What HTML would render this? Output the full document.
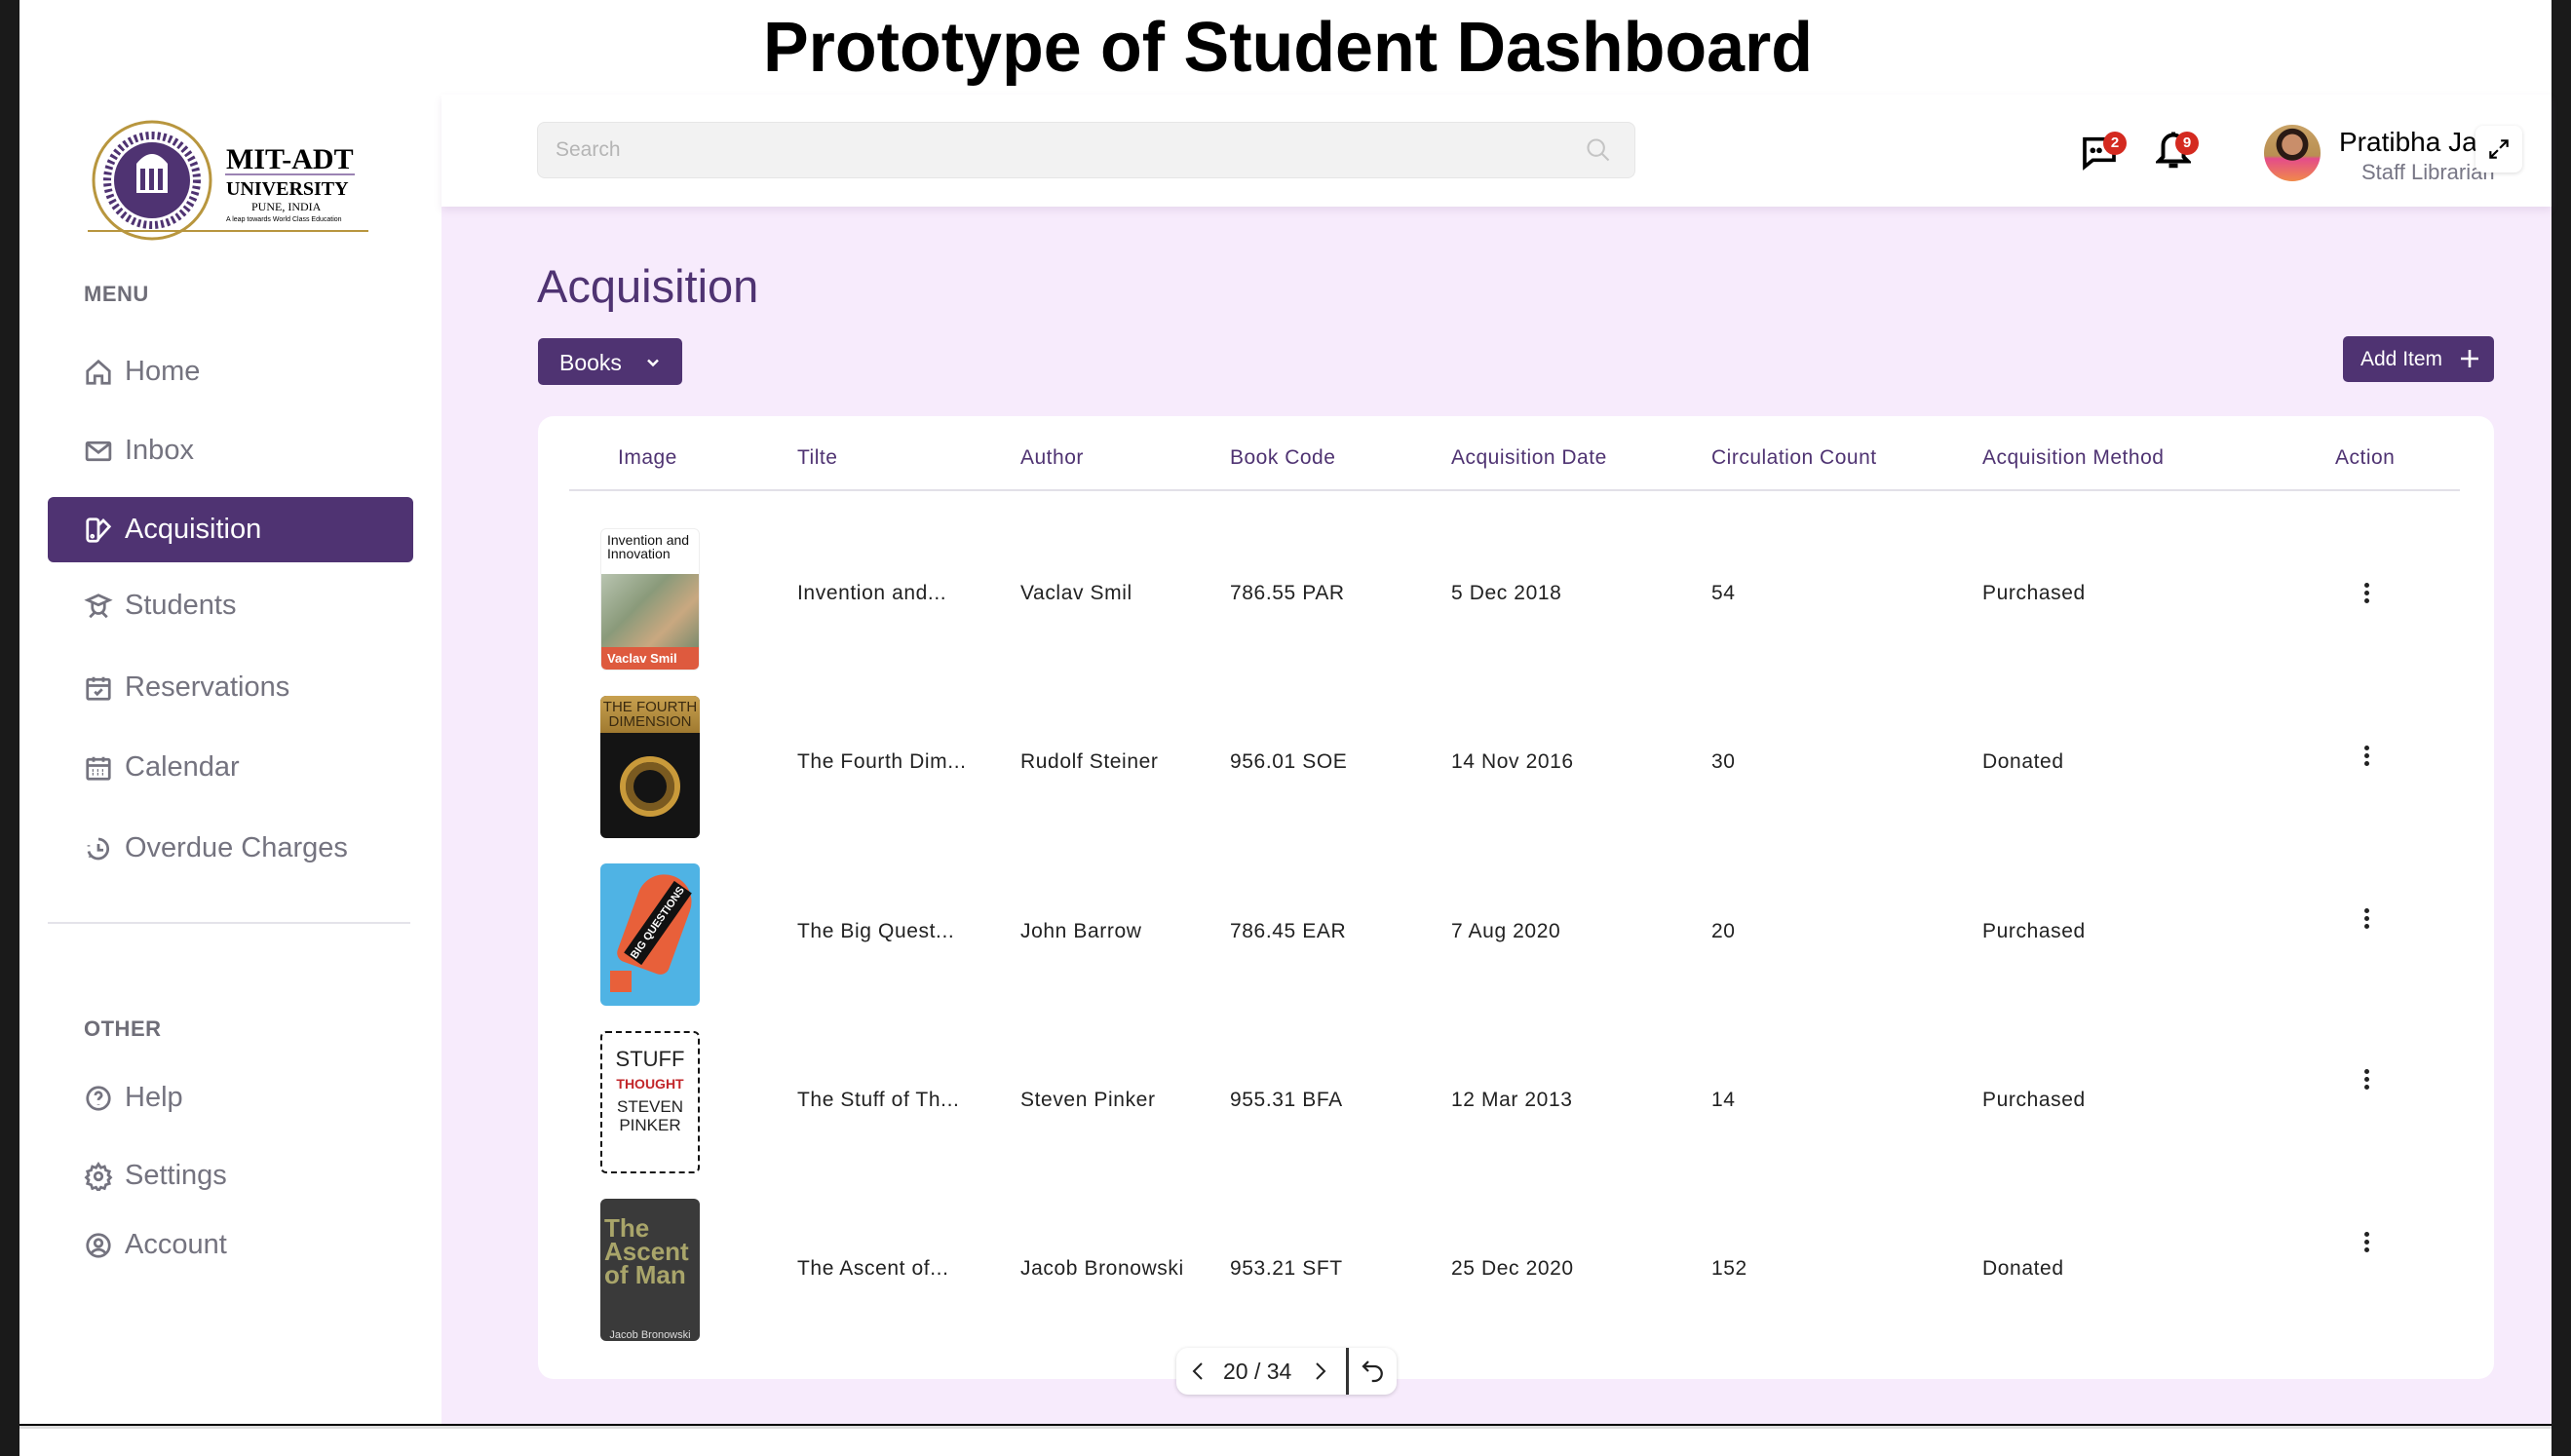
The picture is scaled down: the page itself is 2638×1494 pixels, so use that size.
<!DOCTYPE html>
<html><head><meta charset="utf-8"><style>
*{margin:0;padding:0;box-sizing:border-box}
body{width:2638px;height:1494px;position:relative;background:#fff;font-family:"Liberation Sans",sans-serif;overflow:hidden}
.a{position:absolute}
.nav{position:absolute;left:86px;font-size:29px;color:#74737f;display:flex;align-items:center;gap:12px}
.nav svg{width:30px;height:30px;stroke:#74737f;fill:none;stroke-width:2.2}
.th{position:absolute;top:458px;font-size:21px;color:#4f3372;letter-spacing:.5px}
.td{position:absolute;font-size:21px;color:#222;letter-spacing:.6px}
.cov{position:absolute;left:616px;width:102px;height:146px;border-radius:6px;overflow:hidden}
.dots{position:absolute;left:2426px;width:6px}
.dots i{display:block;width:5px;height:5px;border-radius:50%;background:#222;margin-bottom:3px}
</style></head><body>
<div class="a" style="left:0;top:0;width:20px;height:1494px;background:#1a1a1a"></div>
<div class="a" style="left:2618px;top:0;width:20px;height:1494px;background:#1a1a1a"></div>
<div class="a" style="left:783px;top:8px;width:1074px;height:80px;overflow:visible;white-space:nowrap">
<span style="display:inline-block;font-weight:bold;font-size:72px;color:#000;transform-origin:left top;transform:scaleX(0.972)">Prototype of Student Dashboard</span></div>
<div class="a" style="left:20px;top:97px;width:433px;height:1365px;background:#fff"></div>
<svg class="a" style="left:86px;top:110px" width="296" height="140" viewBox="0 0 296 140">
<circle cx="70" cy="75" r="60" fill="#fff" stroke="#b8963e" stroke-width="3"/>
<circle cx="70" cy="75" r="46" fill="none" stroke="#4f3372" stroke-width="8" stroke-dasharray="3 3"/>
<circle cx="70" cy="75" r="39" fill="#4f3372"/>
<rect x="54" y="58" width="32" height="30" fill="#fff"/>
<rect x="58" y="63" width="5" height="22" fill="#4f3372"/><rect x="67" y="63" width="5" height="22" fill="#4f3372"/><rect x="76" y="63" width="5" height="22" fill="#4f3372"/>
<path d="M54 58 Q70 38 86 58Z" fill="#fff"/>
<line x1="4" y1="127" x2="292" y2="127" stroke="#b8963e" stroke-width="2"/>
<text x="146" y="63" font-family="Liberation Serif" font-weight="bold" font-size="30" fill="#000">MIT-ADT</text>
<line x1="145" y1="69" x2="278" y2="69" stroke="#7a5a9a" stroke-width="1.5"/>
<text x="146" y="90" font-family="Liberation Serif" font-weight="bold" font-size="20" fill="#000">UNIVERSITY</text>
<text x="172" y="106" font-family="Liberation Serif" font-size="12" fill="#000">PUNE, INDIA</text>
<text x="146" y="117" font-family="Liberation Sans" font-size="7" fill="#000">A leap towards World Class Education</text>
</svg>
<div class="a" style="left:86px;top:289px;font-size:22px;color:#6f6e78;font-weight:bold;letter-spacing:.5px">MENU</div>
<div class="nav" style="top:365px"><svg viewBox="0 0 24 24"><path d="M3 11l9-8 9 8v10h-6v-6h-6v6H3z"/></svg>Home</div>
<div class="nav" style="top:446px"><svg viewBox="0 0 24 24"><rect x="2.5" y="5" width="19" height="14" rx="1"/><path d="M3 6l9 7 9-7"/></svg>Inbox</div>
<div class="a" style="left:49px;top:510px;width:375px;height:67px;background:#4f3372;border-radius:6px"></div>
<div class="nav" style="top:527px;color:#fff"><svg viewBox="0 0 24 24" style="stroke:#fff"><rect x="3" y="3" width="9" height="18" rx="2"/><path d="M12 8l4-4 5 5-9 10"/><circle cx="7" cy="17" r=".8"/></svg>Acquisition</div>
<div class="nav" style="top:605px"><svg viewBox="0 0 24 24"><path d="M3 7l9-4 9 4-9 4z"/><path d="M7 9v4a5 5 0 0010 0V9"/><path d="M5 21l4-4M19 21l-4-4"/></svg>Students</div>
<div class="nav" style="top:689px"><svg viewBox="0 0 24 24"><rect x="3" y="5" width="18" height="16" rx="1"/><path d="M3 10h18M8 3v4M16 3v4M9 15l2 2 4-4"/></svg>Reservations</div>
<div class="nav" style="top:771px"><svg viewBox="0 0 24 24"><rect x="3" y="5" width="18" height="16" rx="1"/><path d="M3 10h18M8 3v4M16 3v4M7 14h1M11 14h1M15 14h1M7 17h1M11 17h1M15 17h1"/></svg>Calendar</div>
<div class="nav" style="top:854px"><svg viewBox="0 0 24 24"><path d="M4 14a8 8 0 108-10"/><path d="M12 8v5h4"/><path d="M4 9v1M5 18v1"/></svg>Overdue Charges</div>
<div class="a" style="left:49px;top:946px;width:372px;height:2px;background:#e4e3ea"></div>
<div class="a" style="left:86px;top:1043px;font-size:22px;color:#6f6e78;font-weight:bold;letter-spacing:.5px">OTHER</div>
<div class="nav" style="top:1110px"><svg viewBox="0 0 24 24"><circle cx="12" cy="12" r="9"/><path d="M9.5 9.5a2.5 2.5 0 115 0c0 2-2.5 2-2.5 4M12 17v.5"/></svg>Help</div>
<div class="nav" style="top:1190px"><svg viewBox="0 0 24 24"><circle cx="12" cy="12" r="3"/><path d="M12 2l2 3 3-1 1 3 3 1-1 3 2 2-2 2 1 3-3 1-1 3-3-1-2 3-2-3-3 1-1-3-3-1 1-3-2-2 2-2-1-3 3-1 1-3 3 1z"/></svg>Settings</div>
<div class="nav" style="top:1261px"><svg viewBox="0 0 24 24"><circle cx="12" cy="12" r="9"/><circle cx="12" cy="10" r="3"/><path d="M6.5 18a7 7 0 0111 0"/></svg>Account</div>
<div class="a" style="left:453px;top:97px;width:2165px;height:1365px;background:#f7ebfc"></div>
<div class="a" style="left:453px;top:97px;width:2165px;height:115px;background:#fff;box-shadow:0 4px 8px rgba(120,80,140,.12)"></div>
<div class="a" style="left:551px;top:125px;width:1127px;height:58px;background:#f2f2f2;border:1px solid #e6e6e6;border-radius:8px"></div>
<div class="a" style="left:570px;top:142px;font-size:21px;color:#b5b5b5">Search</div>
<svg class="a" style="left:1626px;top:140px" width="28" height="28" viewBox="0 0 24 24" fill="none" stroke="#c4c4c4" stroke-width="1.8"><circle cx="10" cy="10" r="7"/><path d="M15 15l6 6"/></svg>
<svg class="a" style="left:2134px;top:136px" width="40" height="40" viewBox="0 0 24 24" fill="none" stroke="#000" stroke-width="2.2"><path d="M3 4h18v13H8l-5 4z"/><circle cx="8" cy="11" r=".6" fill="#000"/><circle cx="12" cy="11" r=".6" fill="#000"/></svg>
<div class="a" style="left:2158px;top:135px;width:24px;height:24px;border-radius:50%;background:#d42a20;color:#fff;font-size:15px;font-weight:bold;text-align:center;line-height:24px">2</div>
<svg class="a" style="left:2212px;top:132px" width="36" height="46" viewBox="0 0 24 30" fill="none" stroke="#000" stroke-width="2.6"><path d="M12 4a7 7 0 00-7 7v8l-3 3h20l-3-3v-8a7 7 0 00-7-7z"/><path d="M12 2v2"/><path d="M9 25h6" stroke-width="3"/></svg>
<div class="a" style="left:2232px;top:135px;width:24px;height:24px;border-radius:50%;background:#d42a20;color:#fff;font-size:15px;font-weight:bold;text-align:center;line-height:24px">9</div>
<div class="a" style="left:2323px;top:128px;width:58px;height:58px;border-radius:50%;background:radial-gradient(circle at 50% 35%,#c98e6a 0 22%,#2a1a14 23% 34%,transparent 35%),linear-gradient(180deg,#c8a266 0,#b98f52 55%,#e44c8a 60%,#f08a4a 100%)"></div>
<div class="a" style="left:2400px;top:130px;font-size:28px;color:#000;white-space:nowrap">Pratibha Jain</div>
<div class="a" style="left:2423px;top:164px;font-size:22px;color:#777685;white-space:nowrap">Staff Librarian</div>
<div class="a" style="left:2540px;top:129px;width:48px;height:48px;background:#fff;border-radius:8px;box-shadow:0 1px 4px rgba(0,0,0,.15)"></div>
<svg class="a" style="left:2551px;top:140px" width="26" height="26" viewBox="0 0 24 24" fill="none" stroke="#000" stroke-width="2"><path d="M14 4h6v6M20 4l-7 7M10 20H4v-6M4 20l7-7"/></svg>
<div class="a" style="left:551px;top:266px;font-size:47px;color:#4f3372">Acquisition</div>
<div class="a" style="left:552px;top:347px;width:148px;height:48px;background:#4f3372;border-radius:5px;color:#fff;font-size:23px;padding:12px 0 0 22px">Books</div>
<svg class="a" style="left:660px;top:362px" width="20" height="20" viewBox="0 0 24 24" fill="none" stroke="#fff" stroke-width="3"><path d="M6 9l6 6 6-6"/></svg>
<div class="a" style="left:2404px;top:345px;width:155px;height:47px;background:#4f3372;border-radius:5px;color:#fff;font-size:21px;padding:12px 0 0 18px">Add Item</div>
<svg class="a" style="left:2522px;top:356px" width="24" height="24" viewBox="0 0 24 24" fill="none" stroke="#fff" stroke-width="2.6"><path d="M12 3v18M3 12h18"/></svg>
<div class="a" style="left:552px;top:427px;width:2007px;height:988px;background:#fff;border-radius:16px"></div>
<div class="th" style="left:634px">Image</div>
<div class="th" style="left:818px">Tilte</div>
<div class="th" style="left:1047px">Author</div>
<div class="th" style="left:1262px">Book Code</div>
<div class="th" style="left:1489px">Acquisition Date</div>
<div class="th" style="left:1756px">Circulation Count</div>
<div class="th" style="left:2034px">Acquisition Method</div>
<div class="th" style="left:2396px">Action</div>
<div class="a" style="left:584px;top:502px;width:1940px;height:2px;background:#e2e0e8"></div>
<div class="cov" style="top:542px;background:#fff;border:1px solid #eee">
<div style="font-size:14px;line-height:14px;padding:4px 6px;color:#111">Invention and<br>Innovation</div>
<div style="position:absolute;top:46px;left:0;width:100%;height:75px;background:linear-gradient(135deg,#b8c4b0,#8a9a7a 40%,#c9a880 70%,#7d8c6e)"></div>
<div style="position:absolute;top:121px;left:0;width:100%;height:25px;background:#de5a3e;color:#fff;font-size:13px;padding:4px 6px;font-weight:bold">Vaclav Smil</div></div>
<div class="cov" style="top:714px;background:#141414">
<div style="height:38px;background:linear-gradient(#c8a150,#a07a30);color:#3a2a10;font-size:15px;line-height:15px;text-align:center;padding-top:4px">THE FOURTH<br>DIMENSION</div>
<div style="position:absolute;left:20px;top:62px;width:62px;height:62px;border-radius:50%;border:6px solid #c99a3a;box-shadow:inset 0 0 0 8px #7a5a20"></div></div>
<div class="cov" style="top:886px;background:#4fb3e4">
<div style="position:absolute;left:30px;top:10px;width:56px;height:100px;background:#e8603a;border-radius:30px 30px 10px 10px;transform:rotate(20deg)"></div>
<div style="position:absolute;left:14px;top:50px;width:90px;height:22px;background:#111;color:#fff;font-size:11px;font-weight:bold;transform:rotate(-55deg);text-align:center;line-height:22px">BIG QUESTIONS</div>
<div style="position:absolute;left:10px;top:110px;width:22px;height:22px;background:#e8603a"></div></div>
<div class="cov" style="top:1058px;background:#fff;border:2px dashed #111">
<div style="text-align:center;font-size:22px;line-height:22px;color:#222;margin-top:16px">STUFF</div>
<div style="text-align:center;font-size:14px;color:#c2262a;font-weight:bold;margin-top:6px">THOUGHT</div>
<div style="text-align:center;font-size:17px;line-height:19px;color:#222;margin-top:6px">STEVEN<br>PINKER</div></div>
<div class="cov" style="top:1230px;background:#3a3a3a">
<div style="font-size:26px;line-height:24px;color:#a9a56a;padding:18px 4px 0;font-weight:bold">The<br>Ascent<br>of Man</div>
<div style="position:absolute;bottom:0;width:100%;font-size:11px;color:#ddd;text-align:center">Jacob Bronowski</div></div>
<div class="td" style="left:818px;top:597px">Invention and...</div><div class="td" style="left:1047px;top:597px">Vaclav Smil</div><div class="td" style="left:1262px;top:597px">786.55 PAR</div><div class="td" style="left:1489px;top:597px">5 Dec 2018</div><div class="td" style="left:1756px;top:597px">54</div><div class="td" style="left:2034px;top:597px">Purchased</div>
<div class="td" style="left:818px;top:770px">The Fourth Dim...</div><div class="td" style="left:1047px;top:770px">Rudolf Steiner</div><div class="td" style="left:1262px;top:770px">956.01 SOE</div><div class="td" style="left:1489px;top:770px">14 Nov 2016</div><div class="td" style="left:1756px;top:770px">30</div><div class="td" style="left:2034px;top:770px">Donated</div>
<div class="td" style="left:818px;top:944px">The Big Quest...</div><div class="td" style="left:1047px;top:944px">John Barrow</div><div class="td" style="left:1262px;top:944px">786.45 EAR</div><div class="td" style="left:1489px;top:944px">7 Aug 2020</div><div class="td" style="left:1756px;top:944px">20</div><div class="td" style="left:2034px;top:944px">Purchased</div>
<div class="td" style="left:818px;top:1117px">The Stuff of Th...</div><div class="td" style="left:1047px;top:1117px">Steven Pinker</div><div class="td" style="left:1262px;top:1117px">955.31 BFA</div><div class="td" style="left:1489px;top:1117px">12 Mar 2013</div><div class="td" style="left:1756px;top:1117px">14</div><div class="td" style="left:2034px;top:1117px">Purchased</div>
<div class="td" style="left:818px;top:1290px">The Ascent of...</div><div class="td" style="left:1047px;top:1290px">Jacob Bronowski</div><div class="td" style="left:1262px;top:1290px">953.21 SFT</div><div class="td" style="left:1489px;top:1290px">25 Dec 2020</div><div class="td" style="left:1756px;top:1290px">152</div><div class="td" style="left:2034px;top:1290px">Donated</div>
<div class="dots" style="top:598px"><i></i><i></i><i></i></div>
<div class="dots" style="top:765px"><i></i><i></i><i></i></div>
<div class="dots" style="top:932px"><i></i><i></i><i></i></div>
<div class="dots" style="top:1097px"><i></i><i></i><i></i></div>
<div class="dots" style="top:1264px"><i></i><i></i><i></i></div>
<div class="a" style="left:1207px;top:1383px;width:226px;height:48px;background:#fff;border-radius:12px;box-shadow:0 1px 4px rgba(0,0,0,.18)"></div>
<svg class="a" style="left:1220px;top:1395px" width="20" height="24" viewBox="0 0 20 24" fill="none" stroke="#222" stroke-width="2"><path d="M13 4l-8 8 8 8"/></svg>
<div class="a" style="left:1255px;top:1394px;font-size:23px;color:#222">20 / 34</div>
<svg class="a" style="left:1344px;top:1395px" width="20" height="24" viewBox="0 0 20 24" fill="none" stroke="#222" stroke-width="2"><path d="M7 4l8 8-8 8"/></svg>
<div class="a" style="left:1381px;top:1383px;width:3px;height:48px;background:#333"></div>
<svg class="a" style="left:1394px;top:1392px" width="30" height="30" viewBox="0 0 24 24" fill="none" stroke="#222" stroke-width="1.8"><path d="M8 4L4 8l4 4"/><path d="M4 8h9a6 6 0 110 12h-2"/></svg>
<div class="a" style="left:20px;top:1461px;width:2598px;height:2px;background:#000"></div>
<div class="a" style="left:20px;top:1463px;width:2598px;height:3px;background:#ddd"></div>
</body></html>
